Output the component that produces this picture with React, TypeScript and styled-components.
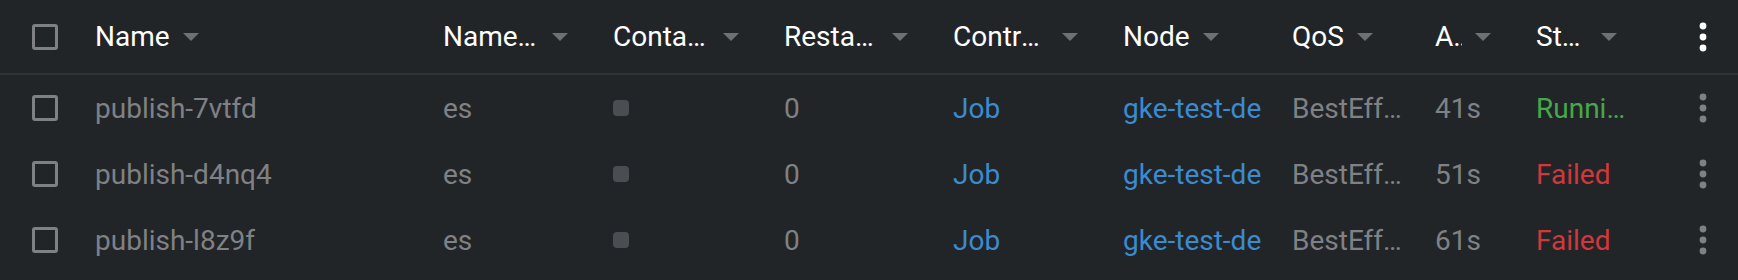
import React from "react";
import styled, { createGlobalStyle } from "styled-components";

const GlobalStyle = createGlobalStyle`
  html, body { margin: 0; padding: 0; background: #222528; }
  body { font-family: Roboto, "Liberation Sans", Arial, sans-serif; }
`;

const COLS = "95px 348px 170px 171px 169px 170px 169px 143px 101px 126px 1fr";

const Table = styled.div`
  width: 1738px;
  height: 280px;
  background: #222528;
  overflow: hidden;
`;

const HeaderRow = styled.div`
  display: grid;
  grid-template-columns: ${COLS};
  height: 73px;
  align-items: center;
  border-bottom: 2px solid #303337;
`;

const Row = styled.div`
  display: grid;
  grid-template-columns: ${COLS};
  height: 66px;
  align-items: center;
`;

const CheckCell = styled.div`
  display: flex;
  align-items: center;
  padding-left: 32px;
`;

const Checkbox = styled.span`
  display: block;
  width: 26px;
  height: 26px;
  box-sizing: border-box;
  border: 3px solid #7e8084;
  border-radius: 3px;
`;

const HeadCell = styled.div`
  display: flex;
  align-items: center;
  min-width: 0;
  padding-right: 45px;
`;

const HeadLabel = styled.span`
  min-width: 0;
  color: #ffffff;
  font-size: 28px;
  white-space: nowrap;
  overflow: hidden;
  text-overflow: ellipsis;
`;

const SortArrow = styled.span`
  flex: none;
  margin-left: 13px;
  width: 0;
  height: 0;
  border-left: 8px solid transparent;
  border-right: 8px solid transparent;
  border-top: 8px solid #6e7073;
`;

type Tone = "muted" | "link" | "ok" | "bad";

const toneColor: Record<Tone, string> = {
  muted: "#7f8184",
  link: "#3b8bd0",
  ok: "#46a84a",
  bad: "#d2373a",
};

const Cell = styled.div<{ $tone?: Tone; $clip?: boolean }>`
  min-width: 0;
  padding-right: 30px;
  font-size: 28px;
  color: ${(p) => toneColor[p.$tone || "muted"]};
  white-space: nowrap;
  overflow: hidden;
  text-overflow: ${(p) => (p.$clip ? "clip" : "ellipsis")};
`;

const Chip = styled.span`
  display: block;
  width: 16px;
  height: 16px;
  border-radius: 4px;
  background: #4a4d51;
`;

const MenuCell = styled.div`
  display: flex;
  justify-content: center;
  align-items: center;
  padding-left: 5px;
`;

const Kebab = ({ color }: { color: string }) => (
  <svg width="8" height="30" viewBox="0 0 8 30">
    <circle cx="4" cy="4" r="3.4" fill={color} />
    <circle cx="4" cy="15" r="3.4" fill={color} />
    <circle cx="4" cy="26" r="3.4" fill={color} />
  </svg>
);

const headers = [
  "Name",
  "Namespace",
  "Containers",
  "Restarts",
  "Controlled By",
  "Node",
  "QoS",
  "Age",
  "Status",
];

type Pod = { name: string; age: string; status: string; tone: Tone };

const pods: Pod[] = [
  { name: "publish-7vtfd", age: "41s", status: "Running", tone: "ok" },
  { name: "publish-d4nq4", age: "51s", status: "Failed", tone: "bad" },
  { name: "publish-l8z9f", age: "61s", status: "Failed", tone: "bad" },
];

export default function App() {
  return (
    <>
      <GlobalStyle />
      <Table>
        <HeaderRow>
          <CheckCell>
            <Checkbox />
          </CheckCell>
          {headers.map((h) => (
            <HeadCell key={h}>
              <HeadLabel>{h}</HeadLabel>
              <SortArrow />
            </HeadCell>
          ))}
          <MenuCell>
            <Kebab color="#ffffff" />
          </MenuCell>
        </HeaderRow>
        {pods.map((p) => (
          <Row key={p.name}>
            <CheckCell>
              <Checkbox />
            </CheckCell>
            <Cell>{p.name}</Cell>
            <Cell>es</Cell>
            <Cell>
              <Chip />
            </Cell>
            <Cell>0</Cell>
            <Cell $tone="link">Job</Cell>
            <Cell $tone="link" $clip>
              gke-test-de
            </Cell>
            <Cell>BestEffort</Cell>
            <Cell>{p.age}</Cell>
            <Cell $tone={p.tone}>{p.status}</Cell>
            <MenuCell>
              <Kebab color="#7f8184" />
            </MenuCell>
          </Row>
        ))}
      </Table>
    </>
  );
}
